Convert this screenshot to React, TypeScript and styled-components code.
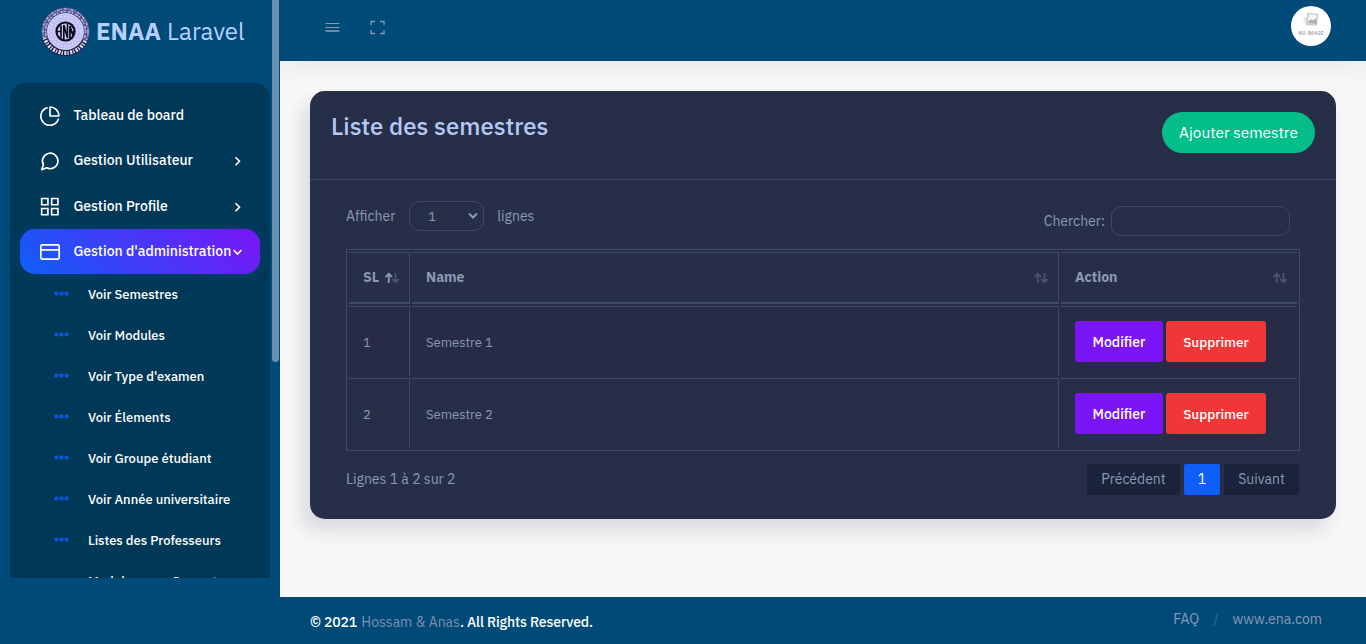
import React from 'react';
import styled, { createGlobalStyle } from 'styled-components';

const Global = createGlobalStyle`
  *, *::before, *::after { box-sizing: border-box; }
  body { margin: 0; background: #f7f7f7; color: #8a99b5; font-family: "IBM Plex Sans", Roboto, sans-serif; font-size: 14px; line-height: 20px; overflow: hidden; }
  button, select, input { font-family: inherit; }
`;

const Page = styled.div`display: flex; width: 1366px; height: 644px; overflow: hidden;`;
const Sidebar = styled.aside`position: relative; width: 280px; height: 644px; background: #004a77; flex: none;`;
const ScrollThumb = styled.div`position: absolute; top: 0; right: 1px; width: 7px; height: 362px; background: #6691ad; border-radius: 0 0 4px 4px;`;
const Brand = styled.div`display: flex; align-items: center; height: 83px; padding: 0 0 21px 41px; color: #b5d0ff;`;
const BrandName = styled.div<{ $bold?: boolean }>`font-size: 24px; line-height: 30px; white-space: pre; font-weight: ${p => (p.$bold ? 700 : 400)}; margin-left: 6px;`;
const Menu = styled.nav`margin: 0 10px; height: 495px; padding: 10px 10px 0; overflow: hidden; background: #003857; border-radius: 15px 15px 0 0;`;
const MenuItem = styled.div<{ $active?: boolean }>`
  display: flex; align-items: center; height: 45.3px; padding: 0 17px 0 20px; border-radius: 15px;
  color: #fff; font-size: 14px; font-weight: 500; white-space: nowrap;
  ${p => p.$active && 'background: linear-gradient(45deg, #0f5ef7, #7a15f7); box-shadow: 0 0 12px 2px #0b4c9366;'}
  & > svg { flex: none; }
`;
const MenuLabel = styled.span`flex: 1; width: 0; margin: 0 0 1px 13.4px;`;
const SubItem = styled.div`display: flex; align-items: center; height: 41px; padding-left: 34px; color: #fff; font-size: 13px; font-weight: 500; white-space: nowrap;`;
const SubLabel = styled.span`margin-left: 19px;`;
const Main = styled.div`display: flex; flex-direction: column; width: 1086px;`;
const Header = styled.header`display: flex; align-items: center; height: 61px; padding: 0 35px 9px 45px; background: #004a77; box-shadow: 0 4px 24px rgba(25, 42, 70, .08); color: #8a99b5; svg { flex: none; }`;
const Tool = styled.span`display: flex; margin: 3px 30px 0 0;`;
const Avatar = styled.div`width: 40px; height: 40px; margin-left: auto; border-radius: 50%; background: #fff; overflow: hidden;`;
const Content = styled.main`flex: 1; padding: 30px;`;
const Card = styled.section`height: 428px; background: #272e48; border-radius: 15px; box-shadow: -8px 12px 18px 0 rgba(25, 42, 70, .13);`;
const CardHeader = styled.div`display: flex; justify-content: space-between; height: 89px; padding: 21px 21px 0; border-bottom: 1px solid #41496a;`;
const Title = styled.h4`margin: -1px 0 0; font-size: 24px; line-height: 30px; font-weight: 500; color: #b5c9f5;`;
const AddButton = styled.button`width: 153px; height: 41px; padding: 0 0 1px; border: 0; border-radius: 21px; background: #04be8a; color: #fff; font-size: 15.4px;`;
const Controls = styled.div`display: flex; justify-content: space-between; height: 69px; padding: 21px 46px 0 36px;`;
const Field = styled.label<{ $top?: number }>`display: flex; align-items: center; height: 30px; margin-top: ${p => p.$top ?? 0}px;`;
const Select = styled.div`display: flex; align-items: center; justify-content: space-between; width: 75px; height: 30px; margin: 0 13px 0 14px; padding: 0 4px 0 18px; border: 1px solid #41496a; border-radius: 10px; font-size: 13px; span { margin-top: 2px; }`;
const Search = styled.input`width: 179px; height: 30px; margin-left: 6px; border: 1px solid #41496a; border-radius: 10px; background: transparent;`;
const Table = styled.table`width: 954px; margin-left: 36px; border: 1px solid #41496a; border-collapse: separate; border-spacing: 2px; table-layout: fixed;`;
const Th = styled.th<{ $w: number }>`width: ${p => p.$w}px; height: 52px; padding: 0 10px 0 14px; text-align: left; font-weight: 700; border-top: 1px solid #41496a; border-bottom: 2px solid #41496a; border-right: 1px solid #41496a; &:last-child { border-right: 0; }`;
const ThInner = styled.div`display: flex; align-items: center; justify-content: space-between; span { margin-bottom: 2px; }`;
const Td = styled.td`height: 70px; padding: 14px; font-size: 13px; border-top: 1px solid #41496a; border-right: 1px solid #41496a; &:last-child { border-right: 0; }`;
const CellText = styled.div`padding-top: 2px;`;
const Row = styled.tr<{ $odd?: boolean }>`background: ${p => (p.$odd ? '#272b45' : 'transparent')};`;
const Actions = styled.div`display: flex; gap: 3px;`;
const ActionButton = styled.button<{ $danger?: boolean }>`width: ${p => (p.$danger ? 100 : 88)}px; height: 41px; padding: 1px 0 0; border: 0; border-radius: 3px; background: ${p => (p.$danger ? '#f03737' : '#7a15f7')}; color: #fff; font-size: ${p => (p.$danger ? 13.6 : 14)}px; font-weight: 500;`;
const TableFoot = styled.div`display: flex; justify-content: space-between; padding: 13px 37px 0 36px; line-height: 31px;`;
const Pager = styled.div`display: flex; gap: 4px;`;
const PageButton = styled.span<{ $w: number; $active?: boolean }>`width: ${p => p.$w}px; height: 31px; border-radius: 2px; text-align: center; background: ${p => (p.$active ? '#0f5ef7' : '#1a233a')}; color: ${p => (p.$active ? '#fff' : '#8a99b5')};`;
const Footer = styled.footer`display: flex; justify-content: space-between; height: 47px; padding: 15px 44px 0 30px; background: #004a77;`;
const Copyright = styled.div`color: #fff; font-weight: 500; line-height: 20px; letter-spacing: -.12px; a { margin-left: 1px; color: #7d8fb3; font-weight: 400; letter-spacing: 0; }`;
const FooterLinks = styled.div`display: flex; line-height: 15px; gap: 14px; i { font-style: normal; color: #41698f; }`;

const Icon = ({ size = 20, children, w = 2 }: { size?: number; w?: number; children: React.ReactNode }) => (
  <svg width={size} height={size} viewBox="0 0 24 24" fill="none" stroke="currentColor" strokeWidth={w} strokeLinecap="round" strokeLinejoin="round">{children}</svg>
);
const PieIcon = () => <Icon><path d="M22 16A10.800 10.800 0 1 1 8.500 2.100" /><path d="M22.800 12A10.800 10.800 0 0 0 12 1.200V12z" /></Icon>;
const ChatIcon = () => <Icon><path d="M21.500 12A9.300 9.300 0 0 1 8 20.200L2 22.500 4.100 16.500A9.300 9.300 0 1 1 21.500 12z" /></Icon>;
const GridIcon = () => <Icon><path d="M2 3h7.500v7.500H2zM14 3h7.500v7.500H14zM14 15h7.500v7.500H14zM2 15h7.500v7.500H2z" strokeLinejoin="miter" /></Icon>;
const CardIcon = () => <Icon><rect x="1" y="3.500" width="22" height="17" rx="1.500" /><path d="M1 9.500h22" /></Icon>;
const Chevron = ({ down }: { down?: boolean }) => (
  <svg width="11" height="11" viewBox="0 0 11 11" fill="none" stroke="currentColor" strokeWidth="1.600"><path d={down ? 'M1.500 4l4 4 4-4' : 'M3.500 2.200l4 4-4 4'} /></svg>
);
const DotsIcon = styled.svg`margin-top: -3px;`;
const Dots = () => (
  <DotsIcon width="15" height="5" viewBox="0 0 15 5" fill="#0f5ef7" fillOpacity=".5" stroke="#0f5ef7" strokeWidth="1.200">
    <circle cx="2.500" cy="2.500" r="1.400" /><circle cx="7.500" cy="2.500" r="1.400" /><circle cx="12.500" cy="2.500" r="1.400" />
  </DotsIcon>
);
const Sort = ({ asc }: { asc?: boolean }) => (
  <svg width="14" height="12" viewBox="0 0 14 12" fill="none" stroke="#4a5372" strokeWidth="1.800">
    <path d="M3.800 11V2M.6 5l3.200-3.200L7 5" stroke={asc ? '#8a99b5' : '#4a5372'} /><path d="M10.500 1v9M7.300 7l3.200 3.200L13.700 7" />
  </svg>
);
const Logo = () => (
  <svg width="49" height="49" viewBox="0 0 49 49">
    <circle cx="24.500" cy="24.500" r="24" fill="#55558f" />
    <circle cx="24.500" cy="24.500" r="22.500" fill="none" stroke="#aeb0dc" strokeWidth="1.500" strokeDasharray="3 1.300 1 1.600" />
    <circle cx="24.500" cy="24.500" r="20" fill="none" stroke="#c5c5e6" strokeWidth="1.400" strokeDasharray="1.500 2.200 3 1" />
    <path d="M3.500 31A22 22 0 0 0 44.500 33" fill="none" stroke="#15153c" strokeWidth="5.500" />
    <path d="M3.500 31A22 22 0 0 0 44.500 33" fill="none" stroke="#dadaf4" strokeWidth="4" strokeDasharray="1.300 1.400 2.200 1" />
    <circle cx="24.500" cy="24.500" r="17.800" fill="#bdbdf3" stroke="#e4e4ff" />
    <circle cx="24.500" cy="24.500" r="15" fill="none" stroke="#d6d6fb" strokeWidth="1.800" strokeDasharray="2 1.800" />
    <circle cx="24.500" cy="24.500" r="11.800" fill="none" stroke="#d0d0f8" strokeWidth="1.800" strokeDasharray="2 1.500" />
    <circle cx="24.500" cy="24.500" r="9" fill="#d3d3ff" stroke="#0a0a1c" strokeWidth="2.200" />
    <path d="M20 18.500v12M16 24.500h4M22.800 32V18l3.700 13V17M29 31V19l3 10M28 25h5" fill="none" stroke="#0a0a1c" strokeWidth="1.700" />
  </svg>
);
const NoImage = () => (
  <svg width="40" height="40" viewBox="0 0 40 40">
    <path d="M12 12l5-1.500 2 9-4 1z" fill="#e4e4e4" />
    <path d="M17 7.500l9.500 1-1 10.500-9.500-1z" fill="#f6f6f6" stroke="#c2c2c2" strokeWidth="1.200" />
    <path d="M17 16l3-3 2 1.500 2-2 1.500 1V18l-8.500-.8z" fill="#b0b0b0" />
    <text x="7.500" y="29" fontSize="4.800" fontWeight="700" fill="#aaa" textLength="25" fontFamily="Roboto">NO IMAGE</text>
  </svg>
);

const subs = ['Voir Semestres', 'Voir Modules', "Voir Type d'examen", 'Voir Élements', 'Voir Groupe étudiant', 'Voir Année universitaire', 'Listes des Professeurs', 'Modules pour Semestre'];

export default function App() {
  return (
    <Page>
      <Global />
      <Sidebar>
        <Brand><Logo /><BrandName $bold>ENAA</BrandName><BrandName>Laravel</BrandName></Brand>
        <Menu>
          <MenuItem><PieIcon /><MenuLabel>Tableau de board</MenuLabel></MenuItem>
          <MenuItem><ChatIcon /><MenuLabel>Gestion Utilisateur</MenuLabel><Chevron /></MenuItem>
          <MenuItem><GridIcon /><MenuLabel>Gestion Profile</MenuLabel><Chevron /></MenuItem>
          <MenuItem $active><CardIcon /><MenuLabel>Gestion d'administration</MenuLabel><Chevron down /></MenuItem>
          {subs.map(s => <SubItem key={s}><Dots /><SubLabel>{s}</SubLabel></SubItem>)}
        </Menu>
        <ScrollThumb />
      </Sidebar>
      <Main>
        <Header>
          <Tool><svg width="15" height="15" viewBox="0 0 15 15" stroke="currentColor" strokeWidth="1"><path d="M.5 3.500h14M.5 7.500h14" /><path d="M.5 11h14" strokeWidth="1.600" /></svg></Tool>
          <Tool><svg width="15" height="15" viewBox="0 0 15 15" fill="none" stroke="currentColor" strokeWidth="1.300"><path d="M1 5V1.500h4M10 1.500h4V5M14 10v3.500h-4M5 13.500H1V10" /></svg></Tool>
          <Avatar><NoImage /></Avatar>
        </Header>
        <Content>
          <Card>
            <CardHeader><Title>Liste des semestres</Title><AddButton>Ajouter semestre</AddButton></CardHeader>
            <Controls>
              <Field>Afficher <Select><span>1</span><svg width="12" height="8" viewBox="0 0 12 8" fill="none" stroke="currentColor" strokeWidth="2"><path d="M2 1.500l4 4 4-4" /></svg></Select> lignes</Field>
              <Field $top={5}>Chercher:<Search /></Field>
            </Controls>
            <Table>
              <thead><tr>
                <Th $w={61}><ThInner><span>SL</span><Sort asc /></ThInner></Th>
                <Th $w={647}><ThInner><span>Name</span><Sort /></ThInner></Th>
                <Th $w={236}><ThInner><span>Action</span><Sort /></ThInner></Th>
              </tr></thead>
              <tbody>
                {[1, 2].map(n => (
                  <Row key={n} $odd={n === 1}>
                    <Td><CellText>{n}</CellText></Td><Td><CellText>Semestre {n}</CellText></Td>
                    <Td><Actions><ActionButton>Modifier</ActionButton><ActionButton $danger>Supprimer</ActionButton></Actions></Td>
                  </Row>
                ))}
              </tbody>
            </Table>
            <TableFoot>
              <span>Lignes 1 à 2 sur 2</span>
              <Pager><PageButton $w={93}>Précédent</PageButton><PageButton $w={36} $active>1</PageButton><PageButton $w={75}>Suivant</PageButton></Pager>
            </TableFoot>
          </Card>
        </Content>
        <Footer>
          <Copyright>© 2021 <a>Hossam &amp; Anas</a>. All Rights Reserved.</Copyright>
          <FooterLinks><span>FAQ</span><i>/</i><span>www.ena.com</span></FooterLinks>
        </Footer>
      </Main>
    </Page>
  );
}
